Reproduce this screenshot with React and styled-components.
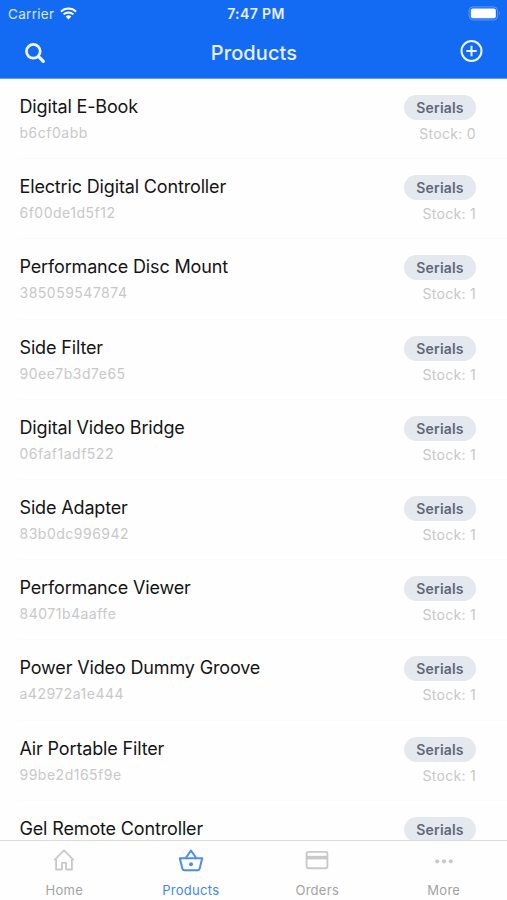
import React from 'react';
import styled, { createGlobalStyle } from 'styled-components';

const GlobalStyle = createGlobalStyle`
  * {
    box-sizing: border-box;
  }

  body {
    margin: 0;
    background: #fefefe;
    font-family: Inter, 'Liberation Sans', sans-serif;
  }
`;

const Screen = styled.div`
  display: flex;
  flex-direction: column;
  width: 507px;
  height: 900px;
  overflow: hidden;
  background: #fefefe;
`;

const Header = styled.header`
  flex: none;
  height: 79px;
  background: #146bf3;
  border-bottom: 1px solid #5c9bf6;
  color: #fff;
`;

const StatusBar = styled.div`
  display: grid;
  grid-template-columns: 1fr auto 1fr;
  align-items: center;
  height: 27px;
  padding: 0 6px 0 8px;
`;

const Carrier = styled.div`
  display: flex;
  align-items: center;
  gap: 6px;
  font-size: 13.5px;
  letter-spacing: 0.3px;
  color: #d9e7fd;
`;

const Clock = styled.div`
  padding-left: 3px;
  font-size: 14px;
  font-weight: 600;
  letter-spacing: 0.4px;
  color: #e8f0fe;
`;

const Battery = styled.svg`
  justify-self: end;
`;

const NavBar = styled.div`
  display: grid;
  grid-template-columns: 1fr auto 1fr;
  align-items: center;
  height: 51px;
  padding: 0 23px 1px 24px;
`;

const Title = styled.h1`
  margin: 0;
  padding-top: 1px;
  font-size: 20px;
  font-weight: 500;
  letter-spacing: 0.1px;
  color: #e8f0fe;
`;

const IconButton = styled.button`
  display: flex;
  justify-self: ${({ $end }) => ($end ? 'end' : 'start')};
  padding: ${({ $end }) => ($end ? '0 0 3px' : '1px 0 0')};
  border: none;
  background: none;
  color: #eef5ff;
`;

const List = styled.ul`
  flex: 1;
  min-height: 0;
  margin: 0;
  padding: 0;
  overflow: hidden;
  list-style: none;
`;

const Row = styled.li`
  display: flex;
  justify-content: space-between;
  height: 80.2px;
  padding: 16px 31px 0 19.5px;
  background: linear-gradient(#fbfbfb, #fbfbfb) 19px 100% / 100% 1px no-repeat;
`;

const Info = styled.div`
  padding-top: 1px;
`;

const Name = styled.div`
  height: 22px;
  line-height: 22px;
  font-size: 18px;
  letter-spacing: -0.15px;
  color: #151515;
`;

const Code = styled.div`
  margin-top: 6px;
  line-height: 18px;
  font-size: 14px;
  letter-spacing: 0.5px;
  color: #c8c8c8;
`;

const Side = styled.div`
  display: flex;
  flex-direction: column;
  align-items: flex-end;
`;

const Badge = styled.span`
  width: 72px;
  height: 25px;
  border-radius: 13px;
  background: #e4e8ef;
  line-height: 25px;
  text-align: center;
  font-size: 14px;
  font-weight: 600;
  letter-spacing: 0.2px;
  color: #606878;
`;

const Stock = styled.div`
  margin-top: 5px;
  line-height: 18px;
  font-size: 14px;
  letter-spacing: 0.3px;
  color: #c8c8c8;
`;

const TabBar = styled.nav`
  flex: none;
  display: grid;
  grid-template-columns: repeat(4, 1fr);
  height: 60px;
  padding-left: 1px;
  border-top: 1px solid #dcdcdc;
  background: #fefefe;
`;

const Tab = styled.a`
  display: flex;
  flex-direction: column;
  align-items: center;
  padding-top: 6px;
  font-size: 13px;
  line-height: 16px;
  letter-spacing: 0.3px;
  color: ${({ $active }) => ($active ? '#3f87f5' : '#a3a3a3')};

  svg {
    height: 28px;
    margin-bottom: 7px;
    color: ${({ $active }) => ($active ? '#4a8df6' : '#c9c9c9')};
  }
`;

const WifiIcon = () => (
  <svg width="17" height="13" viewBox="0 0 17 13" fill="none" stroke="#fff" strokeWidth="2">
    <path d="M0.9 4.6 A10.8 10.8 0 0 1 16.1 4.6" />
    <path d="M3.6 7.4 A7 7 0 0 1 13.4 7.4" />
    <path d="M8.5 12.4 L5.7 9.5 A4 4 0 0 1 11.3 9.5 Z" fill="#fff" stroke="none" />
  </svg>
);

const BatteryIcon = () => (
  <Battery width="33" height="15" viewBox="0 0 33 15" fill="none">
    <rect x="1" y="0.9" width="28.6" height="13" rx="4" stroke="#5c99f8" />
    <rect x="2.8" y="2.6" width="25" height="9.6" rx="2" fill="#fff" />
    <path d="M31 5.2 Q32.6 7.4 31 9.6Z" fill="#78abf8" />
  </Battery>
);

const SearchIcon = () => (
  <svg width="22" height="22" viewBox="0 0 22 22" fill="none" stroke="currentColor">
    <circle cx="9.3" cy="9.3" r="6.9" strokeWidth="2.7" />
    <path d="M14.4 14.4 L19.3 19.3" strokeWidth="3.3" strokeLinecap="round" />
  </svg>
);

const PlusIcon = () => (
  <svg width="24" height="24" viewBox="0 0 24 24" fill="none" stroke="currentColor" strokeWidth="2">
    <circle cx="11.5" cy="12" r="10" />
    <path d="M11.5 6.8 V17.2 M6.3 12 H16.7" />
  </svg>
);

const HomeIcon = () => (
  <svg width="28" viewBox="0 0 28 28" fill="none" stroke="currentColor" strokeWidth="1.8">
    <path d="M4.2 13.1 L14 3.3 L23.8 13.1" strokeLinejoin="round" />
    <path d="M6.1 11.7 V22.5 H12 V15.8 H16 V22.5 H21.9 V11.7" strokeLinejoin="round" />
  </svg>
);

const BasketIcon = () => (
  <svg width="28" viewBox="0 0 28 28" fill="none" stroke="currentColor" strokeWidth="2">
    <path d="M2.8 11.2 H25.2 L22.6 21.7 Q22.2 23.2 20.7 23.2 H7.3 Q5.8 23.2 5.4 21.7 Z" strokeLinejoin="round" />
    <path d="M8.7 11 L14 3.6 L19.3 11" strokeLinejoin="round" />
    <circle cx="14" cy="17.2" r="2" fill="currentColor" stroke="none" />
  </svg>
);

const CardIcon = () => (
  <svg width="28" viewBox="0 0 28 28" fill="none" stroke="currentColor" strokeWidth="1.9">
    <rect x="3.6" y="4.9" width="20.8" height="16.4" rx="1.8" />
    <path d="M3.6 10.6 H24.4" strokeWidth="3.6" />
  </svg>
);

const MoreIcon = () => (
  <svg width="28" viewBox="0 0 28 28" fill="currentColor">
    <circle cx="7.2" cy="14.3" r="2.1" />
    <circle cx="14" cy="14.3" r="2.1" />
    <circle cx="20.8" cy="14.3" r="2.1" />
  </svg>
);

const products = [
  { name: 'Digital E-Book', code: 'b6cf0abb', stock: 0 },
  { name: 'Electric Digital Controller', code: '6f00de1d5f12', stock: 1 },
  { name: 'Performance Disc Mount', code: '385059547874', stock: 1 },
  { name: 'Side Filter', code: '90ee7b3d7e65', stock: 1 },
  { name: 'Digital Video Bridge', code: '06faf1adf522', stock: 1 },
  { name: 'Side Adapter', code: '83b0dc996942', stock: 1 },
  { name: 'Performance Viewer', code: '84071b4aaffe', stock: 1 },
  { name: 'Power Video Dummy Groove', code: 'a42972a1e444', stock: 1 },
  { name: 'Air Portable Filter', code: '99be2d165f9e', stock: 1 },
  { name: 'Gel Remote Controller' },
];

const tabs = [
  { label: 'Home', Icon: HomeIcon },
  { label: 'Products', Icon: BasketIcon, active: true },
  { label: 'Orders', Icon: CardIcon },
  { label: 'More', Icon: MoreIcon },
];

const App = () => {
  return (
    <Screen>
      <GlobalStyle />
      <Header>
        <StatusBar>
          <Carrier>
            Carrier
            <WifiIcon />
          </Carrier>
          <Clock>7:47 PM</Clock>
          <BatteryIcon />
        </StatusBar>
        <NavBar>
          <IconButton aria-label="Search">
            <SearchIcon />
          </IconButton>
          <Title>Products</Title>
          <IconButton $end aria-label="Add product">
            <PlusIcon />
          </IconButton>
        </NavBar>
      </Header>

      <List>
        {products.map(({ name, code, stock }) => (
          <Row key={name}>
            <Info>
              <Name>{name}</Name>
              {code && <Code>{code}</Code>}
            </Info>
            <Side>
              <Badge>Serials</Badge>
              {stock !== undefined && <Stock>Stock: {stock}</Stock>}
            </Side>
          </Row>
        ))}
      </List>

      <TabBar>
        {tabs.map(({ label, Icon, active }) => (
          <Tab key={label} $active={active}>
            <Icon />
            {label}
          </Tab>
        ))}
      </TabBar>
    </Screen>
  );
};

export default App;
